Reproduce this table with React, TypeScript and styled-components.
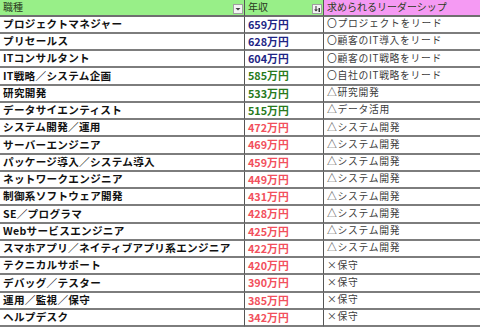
import React from 'react';
import styled, { createGlobalStyle } from 'styled-components';

const GlobalStyle = createGlobalStyle`
  html, body {
    margin: 0;
    padding: 0;
    background: #ffffff;
  }
  body {
    font-family: "Noto Sans CJK JP", "Noto Sans", sans-serif;
  }
`

type Tier = 'high' | 'mid' | 'low';

const rows: { job: string; pay: string; tier: Tier; lead: string }[] = [
  { job: 'プロジェクトマネジャー', pay: '659万円', tier: 'high', lead: '〇プロジェクトをリード' },
  { job: 'プリセールス', pay: '628万円', tier: 'high', lead: '〇顧客のIT導入をリード' },
  { job: 'ITコンサルタント', pay: '604万円', tier: 'high', lead: '〇顧客のIT戦略をリード' },
  { job: 'IT戦略／システム企画', pay: '585万円', tier: 'mid', lead: '〇自社のIT戦略をリード' },
  { job: '研究開発', pay: '533万円', tier: 'mid', lead: '△研究開発' },
  { job: 'データサイエンティスト', pay: '515万円', tier: 'mid', lead: '△データ活用' },
  { job: 'システム開発／運用', pay: '472万円', tier: 'low', lead: '△システム開発' },
  { job: 'サーバーエンジニア', pay: '469万円', tier: 'low', lead: '△システム開発' },
  { job: 'パッケージ導入／システム導入', pay: '459万円', tier: 'low', lead: '△システム開発' },
  { job: 'ネットワークエンジニア', pay: '449万円', tier: 'low', lead: '△システム開発' },
  { job: '制御系ソフトウェア開発', pay: '431万円', tier: 'low', lead: '△システム開発' },
  { job: 'SE／プログラマ', pay: '428万円', tier: 'low', lead: '△システム開発' },
  { job: 'Webサービスエンジニア', pay: '425万円', tier: 'low', lead: '△システム開発' },
  { job: 'スマホアプリ／ネイティブアプリ系エンジニア', pay: '422万円', tier: 'low', lead: '△システム開発' },
  { job: 'テクニカルサポート', pay: '420万円', tier: 'low', lead: '×保守' },
  { job: 'デバッグ／テスター', pay: '390万円', tier: 'low', lead: '×保守' },
  { job: '運用／監視／保守', pay: '385万円', tier: 'low', lead: '×保守' },
  { job: 'ヘルプデスク', pay: '342万円', tier: 'low', lead: '×保守' },
];

const payColor: Record<Tier, string> = {
  high: '#1e2585',
  mid: '#287a1c',
  low: '#f2505c',
};

const Sheet = styled.div`
  width: 480px;
  height: 328px;
  display: grid;
  grid-template-columns: 245px 79px 156px;
  grid-template-rows: 16.5px repeat(18, 17.25px);
  overflow: hidden;
`

const HeadCell = styled.div<{ $bg: string; $last?: boolean }>`
  background: ${p => p.$bg};
  border-bottom: 2px solid #6f6f6f;
  border-right: ${p => (p.$last ? 'none' : '1px solid #555')};
  display: flex;
  align-items: center;
  justify-content: space-between;
  padding: 0 1px 0 3px;
  font-size: 10px;
  color: #2a3a20;
  line-height: 1;
  box-sizing: border-box;
`

const FilterButton = styled.div`
  width: 10px;
  height: 10px;
  margin-top: 3px;
  box-sizing: border-box;
  border: 1px solid #a0a0a0;
  background: #f4f4f4;
  display: flex;
  align-items: center;
  justify-content: center;
`

const Cell = styled.div<{ $last?: boolean }>`
  border-bottom: 2px solid #7d7d7d;
  border-right: ${p => (p.$last ? 'none' : '1px solid #555')};
  display: flex;
  align-items: center;
  padding-left: 3px;
  box-sizing: border-box;
  white-space: nowrap;
  overflow: hidden;
  line-height: 1;
`

const JobCell = styled(Cell)`
  font-size: 10.6px;
  letter-spacing: 0.3px;
  font-weight: 700;
  color: #111;
`

const PayCell = styled(Cell)<{ $tier: Tier }>`
  font-size: 10.8px;
  font-weight: 700;
  color: ${p => payColor[p.$tier]};
`

const LeadCell = styled(Cell)`
  font-size: 9.8px;
  letter-spacing: 0.7px;
  color: #3c3c3c;
`

function FilterIcon({ sorted }: { sorted?: boolean }) {
  return (
    <FilterButton>
      {sorted ? (
        <svg width="8" height="8" viewBox="0 0 8 8">
          <path d="M1 4.5 L3 6.5 L5 4.5 Z" fill="#333" />
          <rect x="2.5" y="1" width="1" height="4" fill="#333" />
          <rect x="5.5" y="3" width="1.5" height="4" fill="#333" />
        </svg>
      ) : (
        <svg width="8" height="8" viewBox="0 0 8 8">
          <path d="M1.5 3 L6.5 3 L4 5.5 Z" fill="#444" />
        </svg>
      )}
    </FilterButton>
  );
}

function App() {
  return (
    <>
      <GlobalStyle />
      <Sheet>
        <HeadCell $bg="#98ef88">
          <span>職種</span>
          <FilterIcon />
        </HeadCell>
        <HeadCell $bg="#98ef88">
          <span>年収</span>
          <FilterIcon sorted />
        </HeadCell>
        <HeadCell $bg="#f59af3" $last>
          <span>求められるリーダーシップ</span>
        </HeadCell>
        {rows.map(r => (
          <React.Fragment key={r.job}>
            <JobCell>{r.job}</JobCell>
            <PayCell $tier={r.tier}>{r.pay}</PayCell>
            <LeadCell $last>{r.lead}</LeadCell>
          </React.Fragment>
        ))}
      </Sheet>
    </>
  );
}

export default App;
